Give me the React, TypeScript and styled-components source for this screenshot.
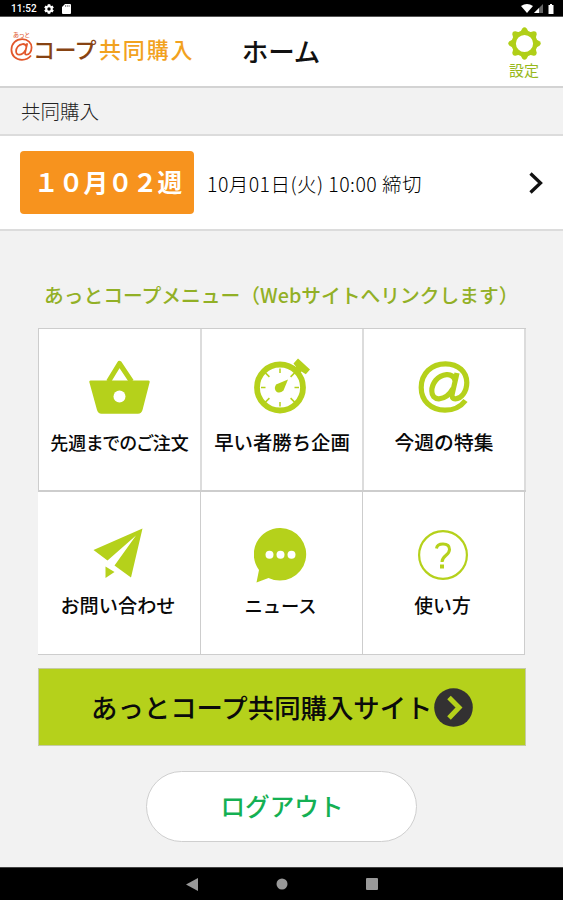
import React from "react";
import styled, { createGlobalStyle } from "styled-components";

const Global = createGlobalStyle`
  * { box-sizing: border-box; }
  body { margin: 0; background: #f2f2f2; font-family: "Noto Sans CJK JP", "Noto Sans", sans-serif; }
  svg { display: block; flex: none; }
`;

const LIME = "#b5d11b";
const LINE = "#cdcdcd";

const Screen = styled.div`
  width: 563px;
  height: 900px;
  display: flex;
  flex-direction: column;
  background: #f2f2f2;
  overflow: hidden;
`;

const StatusBar = styled.div`
  height: 17px;
  flex: none;
  display: flex;
  align-items: center;
  justify-content: space-between;
  padding: 1px 9px 0 11px;
  background: #000;
  border-bottom: 1px solid #555;
  color: #fff;
`;

const StatusGroup = styled.div<{ $gap: number }>`
  display: flex;
  align-items: center;
  gap: ${(p) => p.$gap}px;
`;

const Clock = styled.span`
  width: 25px;
  font: 500 10px/14px Roboto, sans-serif;
  letter-spacing: 0.05px;
`;

const Header = styled.header`
  height: 71px;
  flex: none;
  display: grid;
  grid-template-columns: 200px 1fr 200px;
  background: #fff;
  border-bottom: 2px solid #d3d3d3;
`;

const Logo = styled.div`
  display: flex;
  align-items: flex-start;
  padding: 14px 0 0 10px;
`;

const LogoMark = styled.div`
  width: 23px;
  display: flex;
  flex-direction: column;
  align-items: center;
`;

const Ruby = styled.span`
  height: 7px;
  font-size: 6px;
  line-height: 7px;
  font-weight: 500;
  letter-spacing: -0.4px;
  color: #e2673e;
  white-space: nowrap;
`;

const LogoWord = styled.span<{ $color: string; $spacing: number; $indent: number }>`
  margin-left: ${(p) => p.$indent}px;
  font-size: 22px;
  line-height: 34px;
  font-weight: 500;
  letter-spacing: ${(p) => p.$spacing}px;
  color: ${(p) => p.$color};
  white-space: nowrap;
`;

const PageTitle = styled.h1`
  margin: 0;
  padding-right: 1px;
  text-align: center;
  font-size: 26.5px;
  line-height: 68px;
  font-weight: 500;
  color: #111;
`;

const Settings = styled.div`
  justify-self: end;
  width: 78px;
  padding-top: 10px;
  display: flex;
  flex-direction: column;
  align-items: center;
  font-size: 15px;
  line-height: 19px;
  color: #98b81a;
`;

const SectionLabel = styled.div`
  height: 48px;
  flex: none;
  padding-left: 21px;
  border-bottom: 2px solid #dcdcdc;
  font-size: 19.5px;
  font-weight: 300;
  line-height: 46px;
  color: #222;
`;

const WeekRow = styled.div`
  height: 95px;
  flex: none;
  display: flex;
  align-items: center;
  padding: 0 20px;
  background: #fff;
  border-bottom: 2px solid #dcdcdc;
`;

const WeekBadge = styled.div`
  width: 174px;
  height: 63px;
  margin-right: 13px;
  padding-left: 14px;
  border-radius: 4px;
  background: #f7931e;
  color: #fff;
  font-size: 24.7px;
  font-weight: 700;
  line-height: 61px;
  white-space: nowrap;
`;

const Deadline = styled.div`
  flex: 1;
  padding-top: 3px;
  font-size: 19.5px;
  letter-spacing: 0.45px;
  font-weight: 300;
  line-height: 30px;
  white-space: nowrap;
  color: #000;
`;

const Main = styled.main`
  flex: 1;
  display: flex;
  flex-direction: column;
  padding: 48px 37px 0 38px;
`;

const MenuTitle = styled.h2`
  margin: 0 0 17px 6px;
  font-size: 19.75px;
  line-height: 32px;
  font-weight: 500;
  color: #92b026;
  white-space: nowrap;
`;

const Menu = styled.div`
  width: 488px;
  border-top: 1px solid ${LINE};
`;

const UpperRow = styled.div`
  height: 163px;
  display: grid;
  grid-template-columns: 163px 162px 162px;
  background: #fff;
  border-left: 1px solid ${LINE};
  border-bottom: 2px solid ${LINE};
`;

const LowerRow = styled.div`
  width: 487px;
  height: 163px;
  display: grid;
  grid-template-columns: 163px 162px 162px;
  background: #fff;
  border-bottom: 1px solid ${LINE};
`;

const Tile = styled.div<{ $line: number; $shade: string; $inset?: number }>`
  display: flex;
  flex-direction: column;
  align-items: center;
  padding-right: ${(p) => p.$inset ?? 0}px;
  border-right: ${(p) => p.$line}px solid ${(p) => p.$shade};
`;

const TileIcon = styled.div<{ $lift: number }>`
  height: 98px;
  padding-bottom: ${(p) => p.$lift}px;
  display: flex;
  align-items: flex-end;
  justify-content: center;
`;

const TileLabel = styled.div<{ $size: number; $tight?: boolean }>`
  margin-top: 1px;
  font-size: ${(p) => p.$size}px;
  line-height: 28px;
  font-weight: 500;
  font-feature-settings: ${(p) => (p.$tight ? '"palt"' : "normal")};
  color: #080808;
  white-space: nowrap;
`;

const SiteButton = styled.div`
  width: 488px;
  height: 78px;
  margin-top: 13px;
  display: flex;
  align-items: center;
  padding-left: 52px;
  background: ${LIME};
  border: 1px solid #c5cba6;
`;

const SiteLabel = styled.span`
  width: 343px;
  font-size: 26.4px;
  line-height: 40px;
  font-weight: 500;
  color: #0b0b0b;
  white-space: nowrap;
`;

const Logout = styled.div`
  width: 271px;
  height: 71px;
  margin: 25px 0 0 108px;
  padding-left: 1px;
  border: 1px solid #cfcfcf;
  border-radius: 36px;
  background: #fff;
  color: #14b053;
  text-align: center;
  font-size: 24.6px;
  line-height: 67px;
  font-weight: 500;
`;

const NavBar = styled.nav`
  height: 33px;
  flex: none;
  display: flex;
  align-items: center;
  justify-content: center;
  gap: 78px;
  background: #000;
  border-top: 1px solid #444;
`;

const AtMark = ({ size, color, weight }: { size: number; color: string; weight: number }) => (
  <svg width={size} height={size} viewBox="0 0 52 52" fill="none" stroke={color} strokeWidth={weight}>
    <path d="M47.500 39.500 C42.500 46 36 49.200 27 49.200 C12.500 49.200 3.200 39.500 3.200 26.500 C3.200 12.500 13.500 2.800 27.500 2.800 C40.500 2.800 48.800 11 48.800 21.500 C48.800 31 43 37.800 37.500 37.800 C34.200 37.800 33.600 35.500 34.300 32.500 L39 12" />
    <path d="M37 19 C35.500 15 32.500 13.300 28.500 13.600 C19.500 14.300 13.800 22.500 13.800 30 C13.800 35 16.500 38 21 37.800 C27.500 37.500 32.500 32 35 27.500" />
  </svg>
);

const Gear = () => (
  <svg width="33" height="33" viewBox="-16.500 -16.500 33 33">
    <g fill="#b0cf18">
      {[0, 45, 90, 135, 180, 225, 270, 315].map((a) => (
        <path key={a} transform={`rotate(${a})`} d="M-4.500 -11 L-2.200 -15 Q0 -17.500 2.200 -15 L4.500 -11Z" />
      ))}
    </g>
    <circle r="10.800" fill="none" stroke="#b0cf18" strokeWidth="4.400" />
  </svg>
);

const Basket = () => (
  <svg width="61" height="54" viewBox="0 0 61 54">
    <path d="M19.500 21.500 L30.500 3.500 L42.500 21.500" fill="none" stroke={LIME} strokeWidth="5" strokeLinejoin="round" />
    <path d="M1.500 20.500 H59.500 Q61 20.500 60.700 22 L53.500 50 Q52.500 53.700 49 53.700 H12.500 Q9 53.700 8 50 L0.300 22 Q0 20.500 1.500 20.500Z" fill={LIME} />
    <circle cx="30.500" cy="36.500" r="6" fill="#fff" />
  </svg>
);

const Stopwatch = () => (
  <svg width="57" height="56" viewBox="0 0 57 56">
    <circle cx="26" cy="29.500" r="23" fill="none" stroke={LIME} strokeWidth="5.800" />
    <g transform="translate(26 29.500)" stroke={LIME} strokeWidth="1.500">
      {[0, 45, 90, 135, 180, 225, 270, 315].map((a) => (
        <path key={a} transform={`rotate(${a})`} d={a % 90 ? "M0 -21 V-15" : "M0 -19 V-14.500"} />
      ))}
    </g>
    <path d="M34 21.500 L22 26.500 Q19.500 31 22.500 33.700 Q26 36 29.500 32.500Z" fill={LIME} />
    <path d="M44 0.500 L56 11.500 L51.800 16.200 L47.500 13.500 L45.500 15.500 L40 11 L42 8.700 L39.500 5.500Z" fill={LIME} />
  </svg>
);

const Plane = () => (
  <svg width="50" height="50" viewBox="0 0 50 50" fill={LIME}>
    <path d="M49.500 0.500 L0.500 22 L14.500 32.500 L43 7.500 L21.500 37.500 L38 49.500 Z" />
    <path d="M12.500 38.500 L21.500 44 L12.500 50 Z" />
  </svg>
);

const Bubble = () => (
  <svg width="53" height="55" viewBox="0 0 53 55">
    <path d="M26.500 0 A26.300 26.300 0 1 1 14.500 50 L2.500 54.500 L5 42 A26.300 26.300 0 0 1 26.500 0Z" fill={LIME} />
    <circle cx="15.500" cy="26.800" r="4" fill="#fff" />
    <circle cx="26.500" cy="26.800" r="4" fill="#fff" />
    <circle cx="37.500" cy="26.800" r="4" fill="#fff" />
  </svg>
);

const Question = () => (
  <svg width="50" height="50" viewBox="0 0 50 50" fill="none" stroke={LIME}>
    <circle cx="25" cy="25" r="23.900" strokeWidth="2.200" />
    <path d="M18.500 18.500 Q19 14 25 14 Q31.500 14 31.500 19.500 Q31.500 22.500 27.800 25.500 Q24 28.500 24 32" strokeWidth="3" />
    <rect x="22" y="34.500" width="4" height="4" fill={LIME} stroke="none" />
  </svg>
);

const upperTiles = [
  { label: "先週までのご注文", icon: <Basket />, size: 18, tight: true, lift: 13 },
  { label: "早い者勝ち企画", icon: <Stopwatch />, size: 19.4, lift: 13 },
  { label: "今週の特集", icon: <AtMark size={52} color={LIME} weight={5.2} />, size: 19.8, lift: 14 },
];

const lowerTiles = [
  { label: "お問い合わせ", icon: <Plane />, size: 19.2, lift: 12 },
  { label: "ニュース", icon: <Bubble />, size: 18.3, lift: 7 },
  { label: "使い方", icon: <Question />, size: 18.8, lift: 10 },
];

export default function App() {
  return (
    <>
      <Global />
      <Screen>
        <StatusBar>
          <StatusGroup $gap={8}>
            <Clock>11:52</Clock>
            <svg width="10" height="10" viewBox="-5 -5 10 10">
              <g fill="#fff">
                {[0, 60, 120].map((a) => (
                  <rect key={a} x="-1.300" y="-4.800" width="2.600" height="9.600" transform={`rotate(${a})`} />
                ))}
              </g>
              <circle r="2.700" fill="#000" stroke="#fff" strokeWidth="2" />
            </svg>
            <svg width="9" height="10" viewBox="0 0 9 10">
              <path d="M3 0H8Q9 0 9 1V9Q9 10 8 10H1Q0 10 0 9V3Z" fill="#fff" />
              <path d="M3.500 1V3 M5.300 1V3 M7.100 1V3" stroke="#777" strokeWidth=".8" />
            </svg>
          </StatusGroup>
          <StatusGroup $gap={1}>
            <svg width="12" height="9" viewBox="0 0 12 9"><path d="M0 2Q6 -2 12 2L6 9Z" fill="#fff" /></svg>
            <svg width="9" height="9" viewBox="0 0 9 9"><path d="M9 0V9H0Z" fill="#666" /><path d="M5 4V9H0Z" fill="#fff" /></svg>
            <svg width="10" height="10" viewBox="0 0 10 10"><path d="M5 1H6V0H8V1H9.500V10H4.500V1Z" fill="#fff" /></svg>
          </StatusGroup>
        </StatusBar>

        <Header>
          <Logo>
            <LogoMark>
              <Ruby>あっと</Ruby>
              <AtMark size={23} color="#e2572b" weight={4} />
            </LogoMark>
            <LogoWord $color="#874312" $spacing={-0.6} $indent={0}>コープ</LogoWord>
            <LogoWord $color="#f2a21e" $spacing={1.9} $indent={3}>共同購入</LogoWord>
          </Logo>
          <PageTitle>ホーム</PageTitle>
          <Settings>
            <Gear />
            設定
          </Settings>
        </Header>

        <SectionLabel>共同購入</SectionLabel>

        <WeekRow>
          <WeekBadge>１０月０２週</WeekBadge>
          <Deadline>10月01日(火) 10:00 締切</Deadline>
          <svg width="14" height="22" viewBox="0 0 14 22">
            <path d="M1.500 1.500L11.500 11L1.500 20.500" fill="none" stroke="#111" strokeWidth="3.300" />
          </svg>
        </WeekRow>

        <Main>
          <MenuTitle>あっとコープメニュー（Webサイトへリンクします）</MenuTitle>
          <Menu>
            <UpperRow>
              {upperTiles.map((t) => (
                <Tile key={t.label} $line={2} $shade="#dcdcdc">
                  <TileIcon $lift={t.lift}>{t.icon}</TileIcon>
                  <TileLabel $size={t.size} $tight={t.tight}>{t.label}</TileLabel>
                </Tile>
              ))}
            </UpperRow>
            <LowerRow>
              {lowerTiles.map((t) => (
                <Tile key={t.label} $line={1} $shade={LINE} $inset={2}>
                  <TileIcon $lift={t.lift}>{t.icon}</TileIcon>
                  <TileLabel $size={t.size}>{t.label}</TileLabel>
                </Tile>
              ))}
            </LowerRow>
          </Menu>
          <SiteButton>
            <SiteLabel>あっとコープ共同購入サイト</SiteLabel>
            <svg width="39" height="39" viewBox="0 0 39 39">
              <circle cx="19.500" cy="19.500" r="19.300" fill="#333132" />
              <path d="M15 9.500L25 19.500L15 30" fill="none" stroke={LIME} strokeWidth="5" />
            </svg>
          </SiteButton>
          <Logout>ログアウト</Logout>
        </Main>

        <NavBar>
          <svg width="12" height="13" viewBox="0 0 12 13"><path d="M12 0V13L0 6.500Z" fill="#999" /></svg>
          <svg width="12" height="12" viewBox="0 0 12 12"><circle cx="6" cy="6" r="5.500" fill="#999" /></svg>
          <svg width="12" height="12" viewBox="0 0 12 12"><rect width="12" height="12" rx="1" fill="#999" /></svg>
        </NavBar>
      </Screen>
    </>
  );
}
